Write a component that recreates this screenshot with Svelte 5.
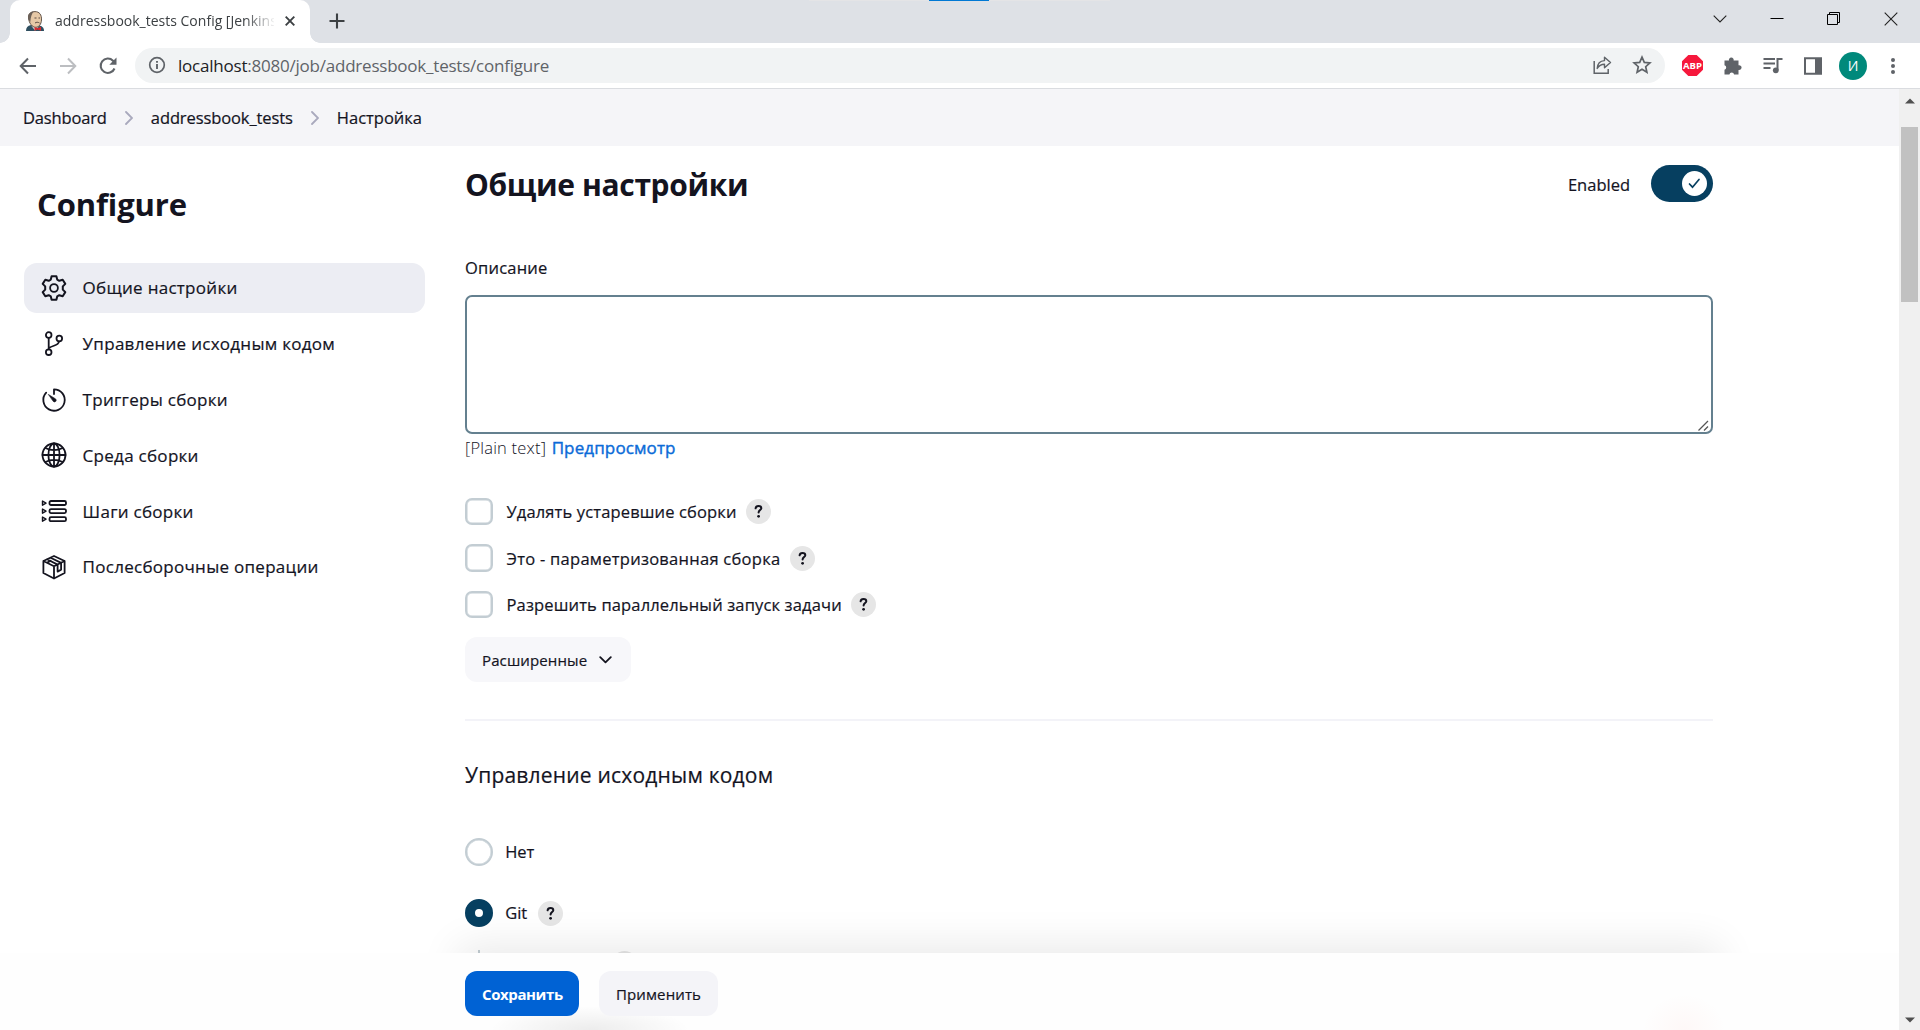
<script>
  const nav = [
    { label: 'Общие настройки', icon: 'gear', active: true },
    { label: 'Управление исходным кодом', icon: 'branch' },
    { label: 'Триггеры сборки', icon: 'timer' },
    { label: 'Среда сборки', icon: 'globe' },
    { label: 'Шаги сборки', icon: 'steps' },
    { label: 'Послесборочные операции', icon: 'box' }
  ];
  const options = [
    { label: 'Удалять устаревшие сборки', cls: 'o1' },
    { label: 'Это - параметризованная сборка', cls: 'o2' },
    { label: 'Разрешить параллельный запуск задачи', cls: 'o3' }
  ];
</script>

{#snippet help()}
  <span class="help"><svg width="11" height="15" viewBox="0 0 11 15"><path d="M2.600 4.300C2.800 2.700 3.900 1.900 5.500 1.900c1.600 0 2.800.9 2.800 2.300 0 1.800-2.700 2.100-2.700 4.400" fill="none" stroke="#14141f" stroke-width="2" stroke-linecap="round"/><circle cx="5.600" cy="12.300" r="1.400" fill="#14141f"/></svg></span>
{/snippet}

{#snippet navIcon(name)}
  <svg class="nav-icon" viewBox="0 0 26 26" fill="none" stroke="#14141f" stroke-width="1.800" stroke-linecap="round" stroke-linejoin="round">
    {#if name === 'gear'}
      <circle cx="13" cy="13" r="3.900"/>
      <path stroke-width="2" d="M10.600 1.200h4.800l.8 3.400 2.100 1.200 3.400-1 2.600 4.100-2.500 2.500v3.200l2.500 2.500-2.600 4.100-3.400-1-2.100 1.200-.8 3.400h-4.800l-.8-3.400-2.100-1.200-3.400 1-2.600-4.100 2.500-2.500v-3.200L1.700 8.900l2.600-4.100 3.400 1 2.100-1.200z"/>
    {:else if name === 'branch'}
      <circle cx="7.700" cy="4" r="2.800"/><circle cx="7.700" cy="21.200" r="2.800"/><circle cx="18.300" cy="7.500" r="2.800"/>
      <path d="M7.700 7v11.300M18 10.500c-.6 4.500-6 3.500-10 6.500"/>
    {:else if name === 'timer'}
      <path d="M13 7V2.300A10.700 10.700 0 1 1 5.200 5.700"/>
      <path d="M7.600 7.600 14.600 11.900a1.700 1.700 0 0 1-2.200 2.600z" fill="#14141f" stroke-width=".6"/>
    {:else if name === 'globe'}
      <circle cx="13" cy="13" r="11.500"/><ellipse cx="13" cy="13" rx="5.600" ry="11.500"/><path d="M13 1.500v23M1.500 13h23M4.500 6c5 2.900 12 2.900 17 0M4.500 20c5-2.900 12-2.900 17 0"/>
    {:else if name === 'steps'}
      <path d="M1.500 3v4.200L5 5.100zM1.500 11v4.200L5 13.100zM1.500 19v4.200L5 21.100z" stroke-width="1.400"/>
      <rect x="8.500" y="3" width="16.500" height="4" rx="1.500"/><rect x="8.500" y="11.100" width="16.500" height="4" rx="1.500"/><rect x="8.500" y="19.200" width="16.500" height="4" rx="1.500"/>
    {:else}
      <path d="M13 2 23.600 7v12L13 24.500 2.400 19V7zM2.400 7 13 12.300 23.600 7M13 12.300v12M9.600 3.700l10.500 5.200M6 5.300l10.600 5.300M6 5.300l3.600-1.600M16.600 10.600v7l3.500-2v-6.700M6.200 8.600l3.600-1.800"/>
    {/if}
  </svg>
{/snippet}

<div class="window">
  <header class="titlebar">
    <div class="task-hint"><i></i></div>
    <div class="tab">
      <svg width="18" height="20" viewBox="0 0 18 20">
        <path d="M0 20c0-3.500 1.500-5.500 5-6l8 .5c3 .5 5 2 5 5.500z" fill="#2f4f60"/>
        <path d="M5.500 15 9 19.500 13.500 15z" fill="#e9e3dc"/>
        <path d="M2.500 7C2 2.500 5.500.6 9 .6c4.300 0 6.800 3 6.500 8.400-.2 4-2.500 7.300-5.700 7.300C6 16.300 3 12 2.500 7z" fill="#e6c8a6" stroke="#54463d" stroke-width=".9"/>
        <path d="M2 5.500C2.500 2 5.500.3 8 .5 5.500 2.500 4.800 6 4.300 11 2.800 9.500 1.700 7.500 2 5.500z" fill="#6b6058"/>
        <path d="M8.500 7h2M12.500 7h1.500M9 12c1.500-1 3-1 4.500 0" stroke="#4b3d35" stroke-width=".9" fill="none"/>
        <path d="m8.500 16 3 1.300 3.500-1.500v4l-3.500-1.400-3 1.400z" fill="#d8292f"/>
      </svg>
      <span class="tab-title"><span class="t">addressbook_tests Config [Jenkins]</span></span>
      <svg class="tab-x" width="12" height="12" viewBox="0 0 12 12"><path d="m1.700 1.700 8.600 8.600m0-8.600-8.600 8.600" stroke="#3c4043" stroke-width="1.900"/></svg>
    </div>
    <svg class="plus" width="16" height="16" viewBox="0 0 16 16"><path d="M8 .5v15M.5 8h15" stroke="#3c4043" stroke-width="2.100"/></svg>
    <div class="win-controls">
      <svg width="14" height="14" viewBox="0 0 14 14"><path d="m.7 3.700 6.300 6.300 6.300-6.300" fill="none" stroke="#222" stroke-width="1.100"/></svg>
      <svg width="14" height="14" viewBox="0 0 14 14"><path d="M.5 6.500h13" stroke="#000"/></svg>
      <svg width="14" height="14" viewBox="0 0 14 14"><path d="M.5 2.500h10v10H.5zM2.500 2.500v-2h10v10h-2" fill="none" stroke="#000"/></svg>
      <svg width="14" height="14" viewBox="0 0 14 14"><path d="m.7.7 12.600 12.600m0-12.600L.7 13.300" stroke="#222" stroke-width="1.100"/></svg>
    </div>
  </header>

  <div class="toolbar">
    <div class="nav-buttons">
      <svg width="18" height="18" viewBox="0 0 18 18"><path d="M17 9H2M9 1.500 1.700 9 9 16.500" fill="none" stroke="#5f6368" stroke-width="2"/></svg>
      <svg width="18" height="18" viewBox="0 0 18 18"><path d="M1 9h15M9 1.500 16.300 9 9 16.500" fill="none" stroke="#bcbec1" stroke-width="2"/></svg>
      <svg width="18" height="18" viewBox="0 0 18 18"><path d="M15.500 11.500A7.200 7.200 0 1 1 14 3.700l1.500 1.600" fill="none" stroke="#5f6368" stroke-width="2.100"/><path d="M17.500.5v7.200h-7.200z" fill="#5f6368"/></svg>
    </div>
    <div class="omnibox">
      <svg width="18" height="18" viewBox="0 0 18 18"><circle cx="9" cy="9" r="7.300" fill="none" stroke="#5f6368" stroke-width="1.700"/><path d="M9 8v5M9 5v1.800" stroke="#5f6368" stroke-width="1.900"/></svg>
      <span class="url"><b>localhost</b>:8080/job/addressbook_tests/configure</span>
      <svg class="share" width="20" height="20" viewBox="0 0 20 20"><path d="M2.200 6v12.200h14V14" fill="none" stroke="#5f6368" stroke-width="1.500"/><path d="M5.200 13.500C5.500 8.500 8.500 5.800 12.500 5.600V2.200l6 5.300-6 5.300V9.300c-3.500 0-5.500 1.200-7.300 4.200z" fill="none" stroke="#5f6368" stroke-width="1.400" stroke-linejoin="round"/></svg>
      <svg width="20" height="20" viewBox="0 0 20 20"><path d="m10 2.200 2.300 5.200 5.600.5-4.200 3.800 1.200 5.500-4.900-2.900-4.900 2.900 1.200-5.500-4.200-3.800 5.600-.5z" fill="none" stroke="#5f6368" stroke-width="1.700"/></svg>
    </div>
    <div class="extensions">
      <span class="abp">ABP</span>
      <svg width="20" height="20" viewBox="0 0 20 20"><path d="M1.500 4.500H6a2.400 2.400 0 1 1 4.600 0h4.900v4.800a2.400 2.400 0 1 1 0 4.600v4.600h-4.400a2.400 2.400 0 0 0-4.700 0H1.500v-4.700a2.400 2.400 0 0 0 0-4.600z" fill="#5f6368"/></svg>
      <svg width="20" height="20" viewBox="0 0 20 20"><path d="M.5 3h11.500M.5 7.500h11.500M.5 12h7M14.500 14V3h5" fill="none" stroke="#5f6368" stroke-width="2"/><circle cx="12.800" cy="14.300" r="2.900" fill="#5f6368"/></svg>
      <svg width="20" height="20" viewBox="0 0 20 20"><path d="M2 2.300h16v15.400H2z" fill="none" stroke="#5f6368" stroke-width="2"/><path d="M12 2h6v16h-6z" fill="#5f6368"/></svg>
      <span class="avatar">И</span>
      <svg width="6" height="18" viewBox="0 0 6 18" fill="#5f6368"><circle cx="3" cy="3" r="2"/><circle cx="3" cy="9" r="2"/><circle cx="3" cy="15" r="2"/></svg>
    </div>
  </div>

  <div class="viewport">
    <div class="page">
      <nav class="crumbs">
        <span class="t c1">Dashboard</span>
        <svg width="8" height="14" viewBox="0 0 8 14"><path d="m1 1 6 6-6 6" fill="none" stroke="#a9a9bd" stroke-width="1.800" stroke-linecap="round"/></svg>
        <span class="t c2">addressbook_tests</span>
        <svg width="8" height="14" viewBox="0 0 8 14"><path d="m1 1 6 6-6 6" fill="none" stroke="#a9a9bd" stroke-width="1.800" stroke-linecap="round"/></svg>
        <span class="t">Настройка</span>
      </nav>

      <div class="columns">
        <aside>
          <h1>Configure</h1>
          {#each nav as item}
            <div class="nav-item" class:active={item.active}>
              {@render navIcon(item.icon)}
              <span class="t">{item.label}</span>
            </div>
          {/each}
        </aside>

        <main>
          <div class="head">
            <h1>Общие настройки</h1>
            <span class="t en">Enabled</span>
            <span class="toggle"><i><svg width="13" height="11" viewBox="0 0 13 11"><path d="m1.500 6 3 3.200L11 1.500" fill="none" stroke="#063f60" stroke-width="1.700" stroke-linecap="round"/></svg></i></span>
          </div>
          <div class="field-label"><span class="t">Описание</span></div>
          <div class="textarea">
            <svg width="11" height="11" viewBox="0 0 11 11"><path d="M.5 10.500 10 1M6 10.500 10 6.500" stroke="#555" stroke-width="1.300"/></svg>
          </div>
          <div class="hint"><span class="format">[Plain text]</span><span class="t preview">Предпросмотр</span></div>

          <div class="options">
            {#each options as o}
              <div class="row"><span class="box"></span><span class="t {o.cls}">{o.label}</span>{@render help()}</div>
            {/each}
          </div>

          <button class="advanced"><span class="t">Расширенные</span><svg width="13" height="8" viewBox="0 0 13 8"><path d="m1.200 1.200 5.300 5.200 5.300-5.200" fill="none" stroke="#14141f" stroke-width="1.800" stroke-linecap="round" stroke-linejoin="round"/></svg></button>

          <hr />
          <h2><span class="t">Управление исходным кодом</span></h2>

          <div class="radios">
            <div class="row"><span class="radio"></span><span class="t">Нет</span></div>
            <div class="row"><span class="radio on"></span><span class="t">Git</span>{@render help()}</div>
          </div>
          <div class="nested"><i></i><span class="help"></span></div>
        </main>
      </div>

      <footer>
        <button class="save">Сохранить</button>
        <button class="apply"><span class="t">Применить</span></button>
      </footer>
    </div>
    <div class="scrollbar">
      <svg width="10" height="6" viewBox="0 0 10 6"><path d="M0 5.500 5 .5l5 5z" fill="#505050"/></svg>
      <i></i>
      <svg class="down" width="10" height="6" viewBox="0 0 10 6"><path d="M0 .5 5 5.500l5-5z" fill="#505050"/></svg>
    </div>
  </div>
</div>

<style>
  :global(body) { margin: 0; }
  .window { width: 1920px; height: 1030px; display: flex; flex-direction: column; overflow: hidden; background: #fff; color: #14141f; font-family: "Open Sans", "Noto Sans", sans-serif; font-size: 16.5px; }
  .window *, .window { box-sizing: border-box; }
  svg { display: block; flex: none; }
  .t { white-space: nowrap; display: inline-block; }
  .page .t { -webkit-text-stroke: .2px currentColor; }

  /* Browser chrome */
  .titlebar { height: 43px; flex: none; background: #dee1e6; display: flex; align-items: flex-start; position: relative; padding-left: 10px; }
  .task-hint { position: absolute; left: 809px; top: 0; width: 301px; height: 1px; background: #e4e4e6; }
  .task-hint i { display: block; width: 60px; height: 1px; margin-left: 120px; background: #0078d4; }
  .tab { width: 300px; height: 43px; background: #fff; border-radius: 10px 10px 0 0; display: flex; align-items: center; padding: 0 14px 1px 16px; position: relative; }
  .tab::before, .tab::after { content: ""; position: absolute; bottom: 0; width: 10px; height: 10px; }
  .tab::before { left: -10px; background: radial-gradient(circle at 0 0, transparent 9.5px, #fff 10px); }
  .tab::after { right: -10px; background: radial-gradient(circle at 100% 0, transparent 9.5px, #fff 10px); }
  .tab-title { margin-left: 11px; width: 219px; flex: none; overflow: hidden; font-size: 14px; line-height: 24px; color: #3c4043; -webkit-mask-image: linear-gradient(90deg, #000 190px, transparent 221px); }
  .tab-x { margin-left: 10px; }
  .plus { margin: 13px 0 0 19px; }
  .win-controls { margin: 12px 22px 0 auto; display: flex; gap: 43px; }

  .toolbar { height: 46px; flex: none; border-bottom: 1px solid #dadce0; display: flex; align-items: center; padding: 0 24.5px 0 19px; }
  .nav-buttons { display: flex; gap: 22px; width: 116px; }
  .omnibox { height: 35px; width: 1530px; margin-bottom: 1px; border-radius: 18px; background: #f1f3f4; display: flex; align-items: center; padding: 0 13px; }
  .url { margin: 1px 0 0 12px; font-size: 17px; letter-spacing: -.22px; color: #5f6368; line-height: 24px; white-space: nowrap; }
  .url b { font-weight: 400; color: #202124; }
  .share { margin: 0 20px 0 auto; }
  .extensions { display: flex; align-items: center; margin-left: auto; gap: 20px; }
  .abp { width: 21px; height: 21px; background: #f6183c; color: #fff; font: 700 9.5px/21px "Open Sans", sans-serif; text-align: center; clip-path: polygon(30% 0, 70% 0, 100% 30%, 100% 70%, 70% 100%, 30% 100%, 0 70%, 0 30%); }
  .avatar { width: 28px; height: 28px; border-radius: 50%; background: #00897b; color: #fff; text-align: center; font-size: 14px; line-height: 27px; margin: 0 2.5px 0 -4px; }

  /* Page */
  .viewport { flex: 1; display: flex; min-height: 0; }
  .page { width: 1899px; flex: none; position: relative; overflow: hidden; }
  .crumbs { height: 57px; background: #f5f5f8; display: flex; align-items: center; padding-left: 23px; gap: 18px; }
  .c1 { letter-spacing: -.15px; }
  .c2 { letter-spacing: -.1px; }
  .columns { display: flex; }
  aside { width: 465px; padding: 40px 40px 0 24px; display: flex; flex-direction: column; gap: 5.8px; }
  h1 { margin: 0; font-size: 31px; font-weight: 700; line-height: 37px; }
  aside h1 { padding-left: 13px; margin-bottom: 34.2px; letter-spacing: -.12px; }
  .nav-item { height: 50px; border-radius: 13px; display: flex; align-items: center; padding-left: 17px; gap: 15.6px; font-size: 17px; letter-spacing: .28px; }
  .nav-item.active { background: #ecedf3; }
  .nav-icon { width: 26px; height: 26px; }

  main { width: 1248px; padding-top: 19px; display: flex; flex-direction: column; }
  .head { display: flex; align-items: center; height: 37px; }
  .head h1 { font-size: 30px; letter-spacing: -.36px; padding-top: 2px; }
  .en { margin-left: auto; padding-top: 1px; }
  .toggle { width: 62px; height: 37px; border-radius: 19px; background: #063f60; margin-left: 21px; padding: 6px; display: flex; justify-content: flex-end; }
  .toggle i { width: 25px; height: 25px; border-radius: 50%; background: #fff; display: grid; place-items: center; }
  .field-label { margin-top: 54px; line-height: 24px; letter-spacing: .2px; }
  .textarea { margin-top: 15px; height: 139px; border: 2px solid #64808f; border-radius: 7px; display: flex; align-items: flex-end; justify-content: flex-end; padding: 1px 2px; }
  .hint { margin-top: 2px; line-height: 24px; display: flex; gap: 5.5px; }
  .format { font-weight: 300; letter-spacing: .2px; }
  .preview { color: #0b6bd8; font-size: 17px; letter-spacing: .12px; }
  .page .preview { -webkit-text-stroke-width: .4px; }
  .options { margin-top: 37.5px; display: flex; flex-direction: column; gap: 18.5px; }
  .row { height: 28px; display: flex; align-items: center; }
  .box { width: 28px; height: 27.5px; border: 2px solid #c3cdd3; box-shadow: inset 0 0 0 .5px #c3cdd3; border-radius: 7px; margin-right: 13.5px; }
  .o1 { letter-spacing: .14px; }
  .o2 { letter-spacing: .27px; }
  .o3 { letter-spacing: .15px; }
  .help { width: 25px; height: 25px; border-radius: 50%; background: #e6e6e6; margin-left: 9.5px; display: grid; place-items: center; }
  button { border: 0; height: 45px; border-radius: 12px; font: 400 15px/24px "Open Sans", "Noto Sans", sans-serif; color: #14141f; display: flex; align-items: center; padding: 0 17px; letter-spacing: .12px; white-space: nowrap; }
  .advanced { margin-top: 18.5px; width: 166px; background: #f7f7fa; justify-content: space-between; padding-right: 19.5px; }
  hr { width: 100%; margin: 37px 0 0; border: 0; height: 2px; background: #f3f3f8; }
  h2 { margin: 39px 0 0; font-size: 21px; line-height: 30px; font-weight: 400; letter-spacing: .2px; }
  .radios { margin-top: 48px; display: flex; flex-direction: column; gap: 33px; }
  .radios .t { padding-bottom: 1px; }
  .radio { width: 28px; height: 28px; border-radius: 50%; border: 2px solid #c3cdd3; box-shadow: inset 0 0 0 .5px #c3cdd3; margin-right: 12.2px; }
  .radio.on { border: 10px solid #063f60; box-shadow: none; }
  .radios .help { margin-left: 10.5px; }
  .nested { display: flex; margin-top: 23px; padding-left: 13px; height: 30px; }
  .nested i { width: 2px; background: #c3cdd3; margin-right: 132px; }
  .nested .help { margin: 1px 0 0; }

  /* Sticky action bar with a shadow that only rises above its top edge */
  footer { position: absolute; left: 0; bottom: 0; width: 1899px; height: 77px; display: flex; gap: 20px; padding: 18px 0 0 465px;
    background: radial-gradient(ellipse 100px 24px at 590px 77px, rgba(0, 0, 0, .07), transparent), radial-gradient(ellipse 42px 36px at 1684px 77px, rgba(255, 80, 60, .035), transparent), #fefefe; }
  footer::before { content: ""; position: absolute; left: 465px; top: 0; width: 1248px; height: 77px; box-shadow: 0 0 42px 7px rgba(0, 0, 0, .09); clip-path: inset(-50px -50px 100% -50px); }
  .save { width: 114px; background: #0062d4; color: #fff; font-weight: 700; letter-spacing: -.4px; }
  .apply { width: 119px; background: #f4f4f8; }

  .scrollbar { width: 21px; flex: none; background: #f0f0f0; display: flex; flex-direction: column; align-items: center; padding: 9px 0 7px; }
  .scrollbar i { width: 17px; height: 175px; background: #c1c1c1; margin-top: 23px; }
  .down { margin-top: auto; }
</style>
